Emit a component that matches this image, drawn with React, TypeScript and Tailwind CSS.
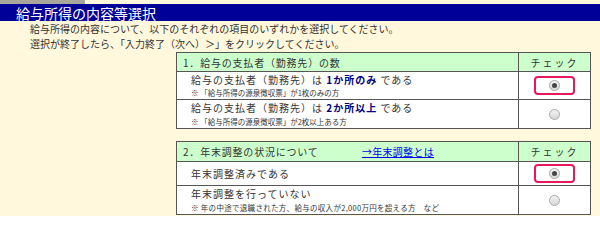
function Radio({ checked }: { checked?: boolean }) {
  return (
    <span className="flex h-[11px] w-[11px] items-center justify-center rounded-full border border-[#a9a9a9] bg-gradient-to-b from-[#f4f4f4] to-[#d6d6d6]">
      {checked && <span className="h-[5px] w-[5px] rounded-full bg-[#444]" />}
    </span>
  )
}

function CheckCell({ checked, h }: { checked?: boolean; h: string }) {
  return (
    <div className={`flex items-center justify-center border-l border-[#555] bg-white ${h}`}>
      {checked ? (
        <div className="flex h-[19px] w-[41px] items-center justify-center rounded-[4px] border-2 border-[#e6195a]">
          <Radio checked />
        </div>
      ) : (
        <Radio />
      )}
    </div>
  )
}

export default function App() {
  return (
    <div
      className="h-[216px] w-[600px] overflow-hidden bg-[#fff8dc] text-[#333]"
      style={{ fontFamily: '"Noto Sans CJK JP", "Noto Sans", sans-serif' }}
    >
      <div className="h-[4px] w-[85px] bg-[#a9a69d]" />
      <div className="flex h-[17px] items-center bg-[#000099] pl-[16px] text-[14px] leading-none text-white">
        給与所得の内容等選択
      </div>

      <div className="pl-[30px] pt-[1px] text-[10px] leading-[14.5px]">
        <p>給与所得の内容について、以下のそれぞれの項目のいずれかを選択してください。</p>
        <p>選択が終了したら、「入力終了（次へ）＞」をクリックしてください。</p>
      </div>

      {/* 1. 支払者の数 */}
      <div className="ml-[176px] mt-[1px] w-[415px] border border-[#555] text-[10px]">
        <div className="grid h-[18px] grid-cols-[341px_1fr] bg-[#ccffcc]">
          <div className="flex items-center pl-[6px] tracking-[0.8px]">1．給与の支払者（勤務先）の数</div>
          <div className="flex items-center justify-center border-l border-[#555] tracking-[2px]">チェック</div>
        </div>
        <div className="grid grid-cols-[341px_1fr] border-t border-[#555]">
          <div className="flex h-[27px] flex-col justify-center bg-white pl-[14px]">
            <div className="leading-[14.5px] tracking-[1px]">
              給与の支払者（勤務先）は <b className="text-[#000080]">1か所のみ</b> である
            </div>
            <div className="text-[7.5px] leading-[11px]">※ 「給与所得の源泉徴収票」が1枚のみの方</div>
          </div>
          <CheckCell checked h="h-[27px]" />
        </div>
        <div className="grid grid-cols-[341px_1fr] border-t border-[#555]">
          <div className="flex h-[28px] flex-col justify-center bg-white pl-[14px]">
            <div className="leading-[14.5px] tracking-[1px]">
              給与の支払者（勤務先）は <b className="text-[#000080]">2か所以上</b> である
            </div>
            <div className="text-[7.5px] leading-[11px]">※ 「給与所得の源泉徴収票」が2枚以上ある方</div>
          </div>
          <CheckCell h="h-[28px]" />
        </div>
      </div>

      {/* 2. 年末調整 */}
      <div className="ml-[176px] mt-[12px] w-[415px] border border-[#555] text-[10px]">
        <div className="grid h-[19px] grid-cols-[341px_1fr] bg-[#ccffcc]">
          <div className="flex items-center justify-between pl-[6px] pr-[84px] tracking-[0.8px]">
            <span>2．年末調整の状況について</span>
            <a href="#" className="tracking-[0.3px] text-[#0000ee] underline">→年末調整とは</a>
          </div>
          <div className="flex items-center justify-center border-l border-[#555] tracking-[2px]">チェック</div>
        </div>
        <div className="grid grid-cols-[341px_1fr] border-t border-[#555]">
          <div className="flex h-[23px] items-center bg-white pl-[14px] tracking-[1px]">年末調整済みである</div>
          <CheckCell checked h="h-[23px]" />
        </div>
        <div className="grid grid-cols-[341px_1fr] border-t border-[#555]">
          <div className="flex h-[28px] flex-col justify-center bg-white pl-[14px]">
            <div className="leading-[14.5px] tracking-[1px]">年末調整を行っていない</div>
            <div className="text-[7.5px] leading-[11px] tracking-[0.3px]">※ 年の中途で退職された方、給与の収入が2,000万円を超える方　など</div>
          </div>
          <CheckCell h="h-[28px]" />
        </div>
      </div>
    </div>
  )
}
